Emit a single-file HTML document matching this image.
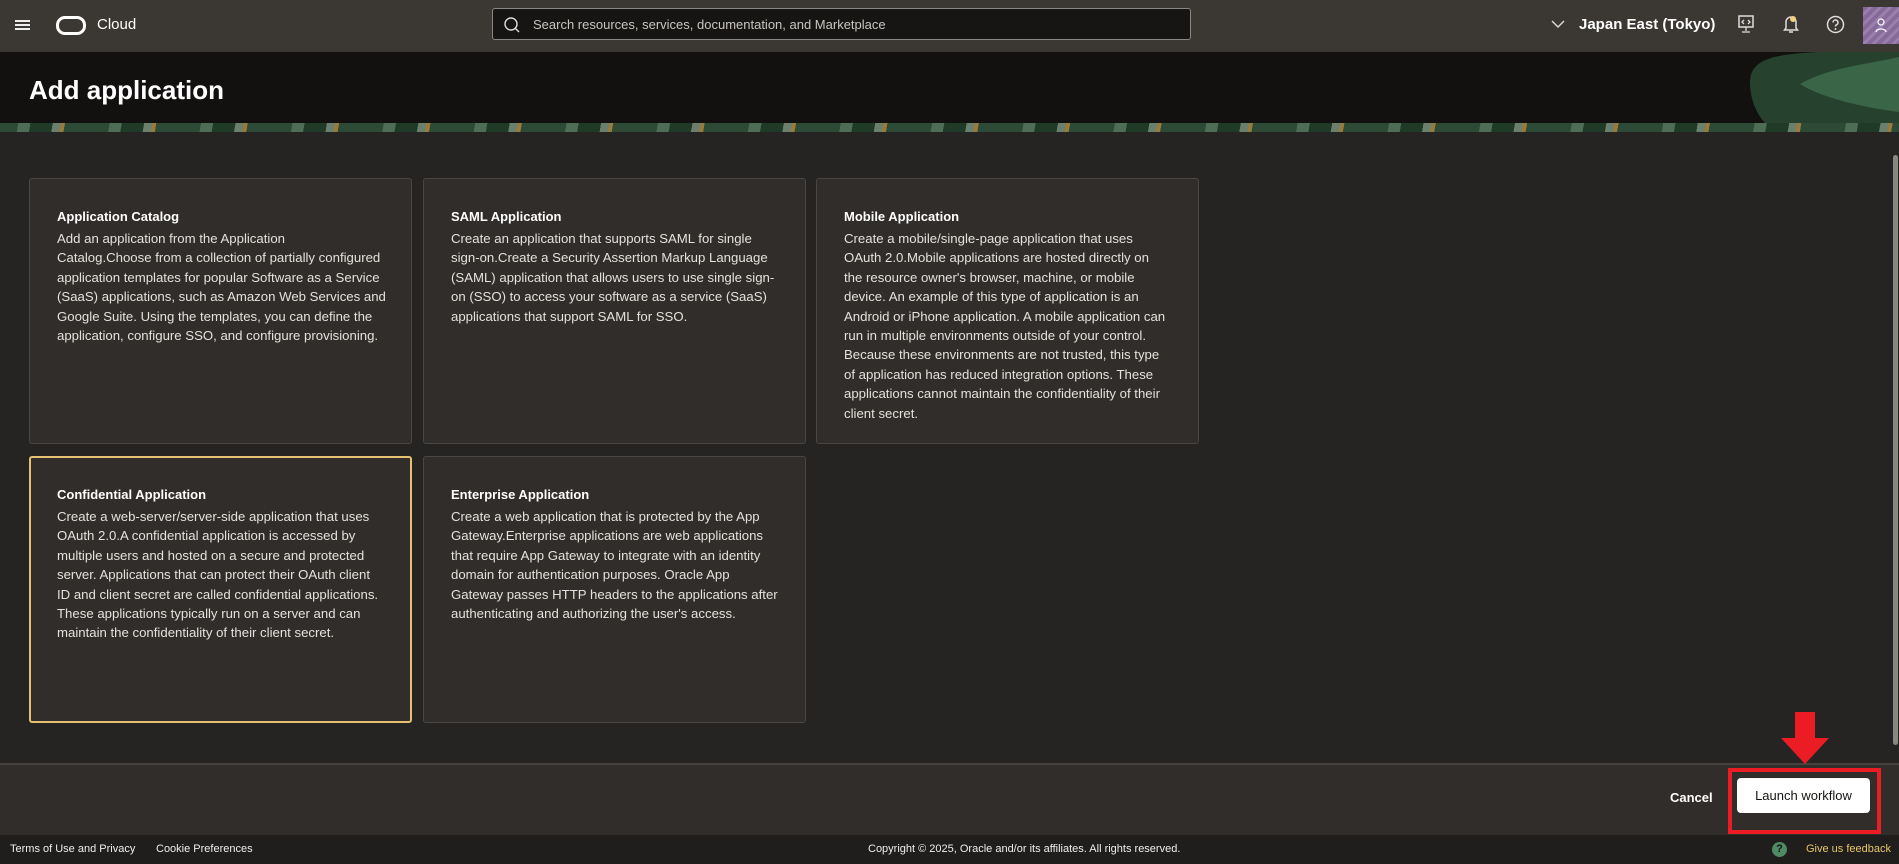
<!DOCTYPE html>
<html><head><meta charset="utf-8">
<style>
*{box-sizing:border-box;margin:0;padding:0}
body{width:1899px;height:864px;overflow:hidden;background:#262422;font-family:"Liberation Sans",sans-serif;color:#fff;position:relative}
.top{position:absolute;left:0;top:0;width:1899px;height:52px;background:#3b3833}
.band{position:absolute;left:0;top:52px;width:1899px;height:71px;background:#121110;overflow:hidden}
.strip{position:absolute;left:0;top:123px;width:1899px;height:9px;background:repeating-linear-gradient(100deg,#2c4a35 0 18px,#4d6e55 18px 30px,#1f3a27 30px 52px,#6a7f6c 52px 60px,#9a7a3a 60px 64px,#2c4a35 64px 90px)}
.card{position:absolute;background:#312d2a;border:1px solid #4a4643;border-radius:3px;padding:24px 0 0 27px}
.card.sel{border:2px solid #e3c16f;padding:23px 0 0 26px}
.card h3{font-size:13px;font-weight:bold;line-height:19px;margin-top:4px;margin-bottom:3px;color:#fff}
.card p{font-size:13.2px;line-height:19.4px;color:#e4e1dd;white-space:nowrap}
.foot{position:absolute;left:0;top:763px;width:1899px;height:72px;background:#312d2a;border-top:2px solid #45413d}
.bottom{position:absolute;left:0;top:835px;width:1899px;height:29px;background:#201e1c;font-size:11px;line-height:29px}
</style></head><body>
<div class="top">
  <div style="position:absolute;left:15px;top:20px;width:15px;height:2px;background:#eee;box-shadow:0 4px 0 #eee,0 8px 0 #eee"></div>
  <div style="position:absolute;left:56px;top:16px;width:30px;height:19px;border:3px solid #fff;border-radius:9px"></div>
  <div style="position:absolute;left:97px;top:15px;font-size:15px;line-height:20px">Cloud</div>
  <div style="position:absolute;left:492px;top:8px;width:699px;height:32px;background:#161513;border:1px solid #8a8682;border-radius:3px">
    <svg style="position:absolute;left:10px;top:7px" width="18" height="18" viewBox="0 0 18 18"><circle cx="8" cy="8" r="6" fill="none" stroke="#ddd" stroke-width="1.4"/><path d="M12.5 12.5L16 16" stroke="#ddd" stroke-width="1.4"/></svg>
    <span style="position:absolute;left:40px;top:8px;font-size:13px;color:#c9c5c0">Search resources, services, documentation, and Marketplace</span>
  </div>
  <svg style="position:absolute;left:1551px;top:19px" width="14" height="10" viewBox="0 0 14 10"><path d="M1 2l6 6 6-6" fill="none" stroke="#ddd" stroke-width="1.4"/></svg>
  <div style="position:absolute;left:1579px;top:15px;font-size:15px;font-weight:bold;line-height:20px">Japan East (Tokyo)</div>
  <svg style="position:absolute;left:1737px;top:15px" width="18" height="20" viewBox="0 0 18 20"><rect x="2" y="1" width="14" height="11" fill="none" stroke="#ddd" stroke-width="1.5"/><path d="M9 12v4M5 17h8M7 5l-2 2 2 2M11 5l2 2-2 2" fill="none" stroke="#ddd" stroke-width="1.3"/></svg>
  <svg style="position:absolute;left:1783px;top:14px" width="16" height="20" viewBox="0 0 16 20"><path d="M3 14V8a5 5 0 0 1 10 0v6l1.5 2h-13z" fill="none" stroke="#ddd" stroke-width="1.5"/><circle cx="10" cy="5" r="3" fill="#f2d37b"/><path d="M6 18h4" stroke="#ddd" stroke-width="1.5"/></svg>
  <svg style="position:absolute;left:1826px;top:15px" width="19" height="19" viewBox="0 0 19 19"><circle cx="9.5" cy="9.5" r="8" fill="none" stroke="#ddd" stroke-width="1.5"/><path d="M7 7.5a2.5 2.5 0 1 1 3.5 2.3c-.7.3-1 .8-1 1.7" fill="none" stroke="#ddd" stroke-width="1.5"/><circle cx="9.5" cy="14" r="1" fill="#ddd"/></svg>
  <div style="position:absolute;left:1863px;top:7px;width:36px;height:37px;background:repeating-linear-gradient(135deg,#866a9a 0 4px,#9b80ae 4px 7px)">
    <svg style="position:absolute;left:11px;top:11px" width="14" height="15" viewBox="0 0 14 15"><circle cx="7" cy="4" r="3" fill="none" stroke="#fff" stroke-width="1.2"/><path d="M2 14c0-4 10-4 10 0" fill="none" stroke="#fff" stroke-width="1.2"/></svg>
  </div>
</div>
<div class="band">
  <div style="position:absolute;left:29px;top:22px;font-size:26px;font-weight:bold;line-height:32px">Add application</div>
  <svg style="position:absolute;left:1740px;top:0" width="159" height="71" viewBox="0 0 159 71"><path d="M10 30C10 5 40 2 80 0h79v71H25C15 60 10 45 10 30z" fill="#27412f"/><path d="M60 32C90 15 130 12 159 5v55C120 55 80 45 60 32z" fill="#3a6647"/></svg>
</div>
<div class="strip"></div>

<div class="card" style="left:29px;top:178px;width:383px;height:266px"><h3>Application Catalog</h3><p>Add an application from the Application<br>Catalog.Choose from a collection of partially configured<br>application templates for popular Software as a Service<br>(SaaS) applications, such as Amazon Web Services and<br>Google Suite. Using the templates, you can define the<br>application, configure SSO, and configure provisioning.</p></div>
<div class="card" style="left:423px;top:178px;width:383px;height:266px"><h3>SAML Application</h3><p>Create an application that supports SAML for single<br>sign-on.Create a Security Assertion Markup Language<br>(SAML) application that allows users to use single sign-<br>on (SSO) to access your software as a service (SaaS)<br>applications that support SAML for SSO.</p></div>
<div class="card" style="left:816px;top:178px;width:383px;height:266px"><h3>Mobile Application</h3><p>Create a mobile/single-page application that uses<br>OAuth 2.0.Mobile applications are hosted directly on<br>the resource owner's browser, machine, or mobile<br>device. An example of this type of application is an<br>Android or iPhone application. A mobile application can<br>run in multiple environments outside of your control.<br>Because these environments are not trusted, this type<br>of application has reduced integration options. These<br>applications cannot maintain the confidentiality of their<br>client secret.</p></div>
<div class="card sel" style="left:29px;top:456px;width:383px;height:267px"><h3>Confidential Application</h3><p>Create a web-server/server-side application that uses<br>OAuth 2.0.A confidential application is accessed by<br>multiple users and hosted on a secure and protected<br>server. Applications that can protect their OAuth client<br>ID and client secret are called confidential applications.<br>These applications typically run on a server and can<br>maintain the confidentiality of their client secret.</p></div>
<div class="card" style="left:423px;top:456px;width:383px;height:267px"><h3>Enterprise Application</h3><p>Create a web application that is protected by the App<br>Gateway.Enterprise applications are web applications<br>that require App Gateway to integrate with an identity<br>domain for authentication purposes. Oracle App<br>Gateway passes HTTP headers to the applications after<br>authenticating and authorizing the user's access.</p></div>

<div style="position:absolute;left:1893px;top:155px;width:5px;height:590px;background:#8a8782;border-radius:3px"></div>

<div class="foot">
  <div style="position:absolute;left:1670px;top:25px;font-size:13px;font-weight:bold">Cancel</div>
  <div style="position:absolute;left:1728px;top:3px;width:153px;height:66px;border:4px solid #ec1c24"></div>
  <div style="position:absolute;left:1737px;top:13px;width:133px;height:35px;background:#fff;border-radius:4px;color:#161513;font-size:13px;line-height:35px;text-align:center">Launch workflow</div>
</div>
<svg style="position:absolute;left:1781px;top:712px" width="48" height="52" viewBox="0 0 48 52"><path d="M14 0h20v26h14L24 52 0 26h14z" fill="#ec1c24"/></svg>

<div class="bottom">
  <span style="position:absolute;left:10px;color:#eee">Terms of Use and Privacy</span>
  <span style="position:absolute;left:156px;color:#eee">Cookie Preferences</span>
  <span style="position:absolute;left:868px;color:#eee">Copyright © 2025, Oracle and/or its affiliates. All rights reserved.</span>
  <span style="position:absolute;left:1772px;top:7px;width:15px;height:15px;border-radius:50%;background:#4f8a62;color:#111;font-size:11px;font-weight:bold;line-height:15px;text-align:center">?</span>
  <span style="position:absolute;left:1806px;color:#e6c56a">Give us feedback</span>
</div>
</body></html>
